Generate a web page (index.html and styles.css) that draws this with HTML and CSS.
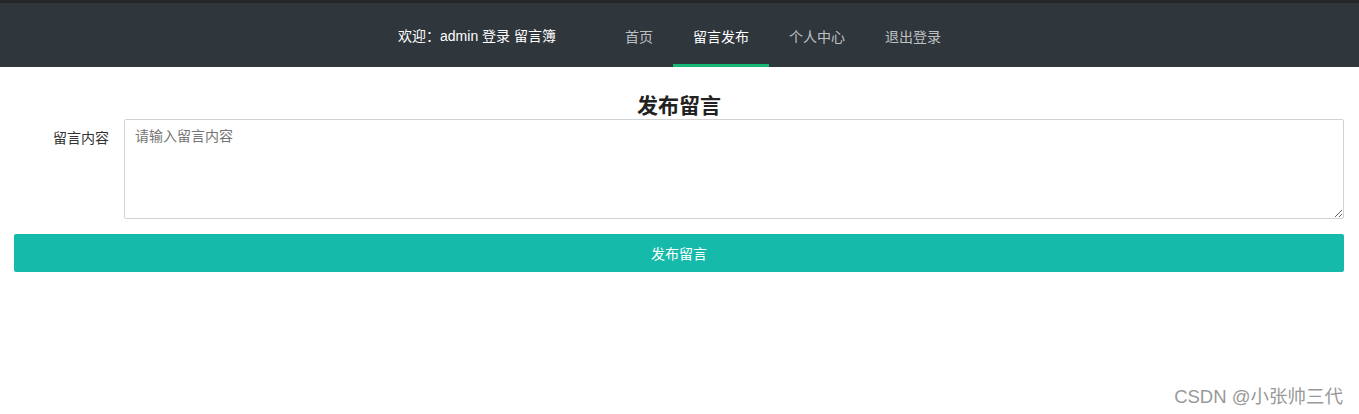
FILE: index.html
```html
<!DOCTYPE html>
<html lang="zh-Hans">

<head>
    <meta charset="UTF-8">
    <meta name="viewport" content="width=device-width, initial-scale=1.0">
    <title>留言发布</title>
    <link rel="stylesheet" href="styles.css">
</head>

<body>
    <div class="header">
        <div class="nav">
            <div class="welcome">欢迎：admin 登录 留言簿</div>
            <ul class="nav-list">
                <li class="nav-item"><a href="#">首页</a></li>
                <li class="nav-item active"><a href="#">留言发布</a></li>
                <li class="nav-item"><a href="#">个人中心</a></li>
                <li class="nav-item"><a href="#">退出登录</a></li>
            </ul>
        </div>
    </div>

    <div class="container">
        <h2 class="title">发布留言</h2>
        <form class="form">
            <div class="form-item">
                <label class="form-label">留言内容</label>
                <div class="input-block">
                    <textarea class="textarea" placeholder="请输入留言内容"></textarea>
                </div>
            </div>
            <button type="button" class="btn">发布留言</button>
        </form>
    </div>

    <div class="watermark">CSDN @小张帅三代</div>
</body>

</html>
```

FILE: styles.css
```css
body {
    margin: 0;
    font-family: "Liberation Sans", "Noto Sans CJK SC", sans-serif;
    font-size: 14px;
    color: #333;
    background-color: #fff;
}

.header {
    background-color: #2f363c;
    border-top: 3px solid #262626;
}

.nav {
    display: flex;
    justify-content: center;
    align-items: center;
    height: 64px;
}

.welcome {
    color: #fff;
    font-size: 14px;
    margin-right: 49px;
}

.nav-list {
    display: flex;
    list-style: none;
    margin: 0;
    padding: 0;
    height: 64px;
}

.nav-item {
    position: relative;
    line-height: 68px;
}

.nav-item a {
    display: block;
    padding: 0 20px;
    color: rgba(255, 255, 255, 0.7);
    text-decoration: none;
}

.nav-item.active a {
    color: #fff;
}

.nav-item.active::after {
    content: "";
    position: absolute;
    left: 0;
    right: 0;
    bottom: 0;
    height: 3px;
    background-color: #16b777;
}

.container {
    padding: 0 15px 0 14px;
}

.title {
    margin: 25px 0 0;
    text-align: center;
    font-size: 21px;
    line-height: 27px;
    font-weight: bold;
    color: #222;
}

.form-item {
    display: flex;
    margin-bottom: 15px;
}

.form-label {
    width: 80px;
    padding: 9px 15px;
    line-height: 20px;
    text-align: right;
    font-size: 14px;
    color: #333;
}

.input-block {
    flex: 1;
}

.textarea {
    display: block;
    box-sizing: border-box;
    width: 100%;
    height: 100px;
    padding: 6px 10px;
    line-height: 20px;
    border: 1px solid #d2d2d2;
    border-radius: 2px;
    font-family: inherit;
    font-size: 14px;
    resize: vertical;
    outline: none;
}

.textarea::placeholder {
    color: #757575;
}

.btn {
    display: block;
    width: 100%;
    height: 38px;
    border: none;
    border-radius: 2px;
    background-color: #16baaa;
    color: #fff;
    font-family: inherit;
    font-size: 14px;
    cursor: pointer;
}

.watermark {
    position: absolute;
    right: 16px;
    top: 382px;
    font-size: 18.5px;
    color: #999;
    text-shadow: 0 0 1px #fff;
}
```
